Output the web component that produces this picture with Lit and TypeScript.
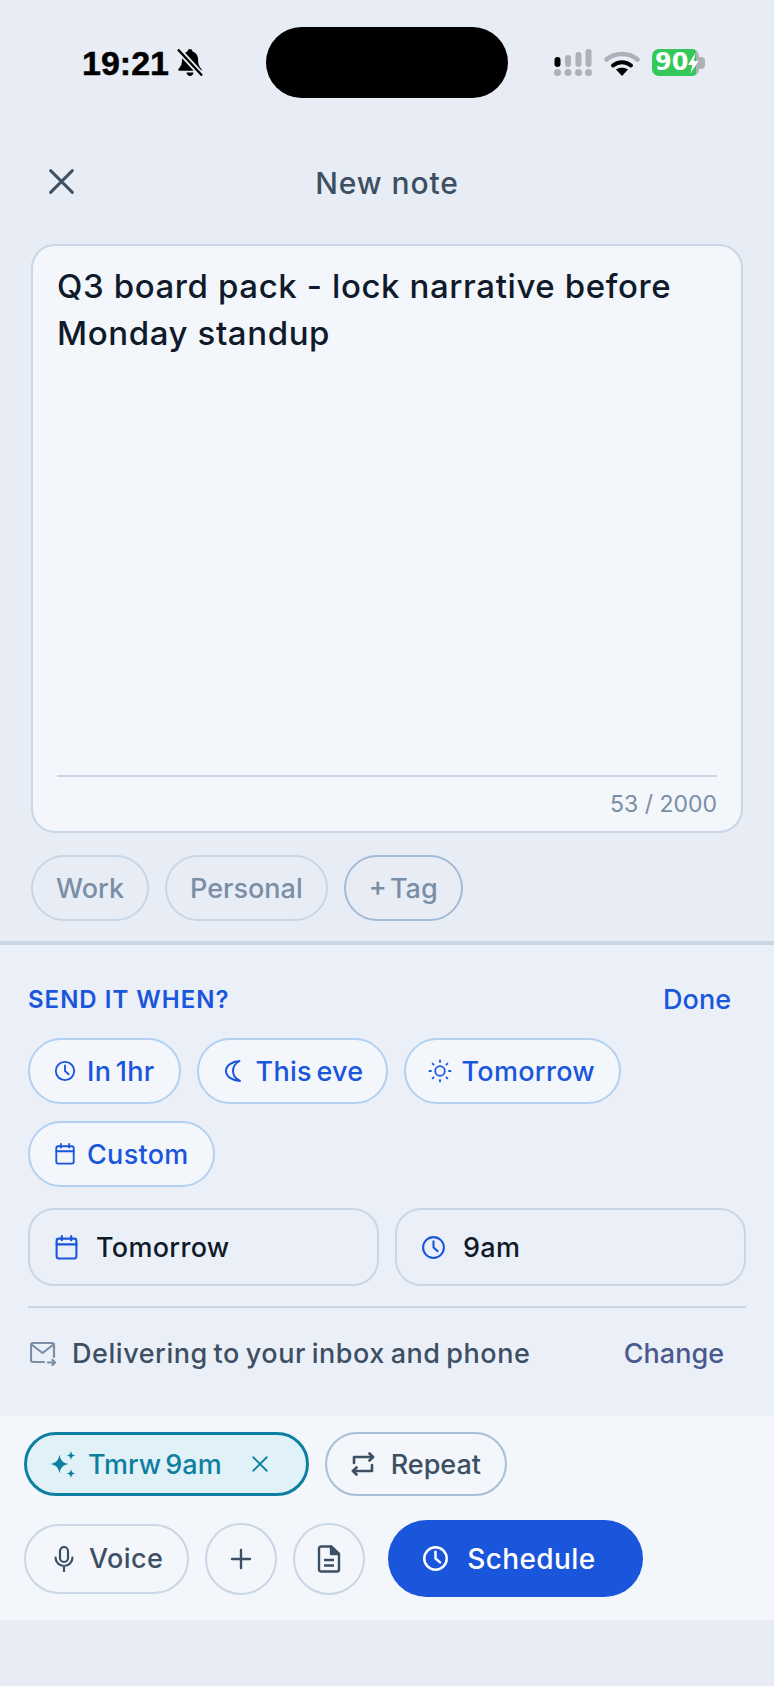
import { LitElement, html, css, svg } from "lit";
import { customElement } from "lit/decorators.js";

const ic = (size: number, body: unknown, sw = 2) => html`<svg class="ic" width=${size} height=${size} viewBox="0 0 24 24" fill="none" stroke="currentColor" stroke-width=${sw} stroke-linecap="round" stroke-linejoin="round">${body}</svg>`;
const clock = svg`<circle cx="12" cy="12" r="10"/><path d="M12 6v6l4 3.500"/>`;
const sun = svg`<circle cx="12" cy="12" r="4.800"/><path d="M12 1.500v1.500M12 21v1.500M1.500 12H3M21 12h1.500M4.600 4.600l1 1M18.400 18.400l1 1M4.600 19.400l1-1M18.400 5.600l1-1"/>`;
const cal = svg`<rect x="2.500" y="3.500" width="19" height="19" rx="2"/><path d="M2.500 9h19M7.500 1v4M16.500 1v4"/>`;
const x = svg`<path d="M3 3l18 18M21 3L3 21"/>`;

@customElement("app-root")
export class AppRoot extends LitElement {
  static styles = css`
    :host { display: block; width: 774px; height: 1686px; background: #e8edf5; font-family: "Inter", "Liberation Sans", sans-serif; overflow: hidden; }
    * { box-sizing: border-box; }
    .ic { display: block; flex: none; }
    .status { display: flex; align-items: center; padding-top: 27px; height: 98px; }
    .s-left { width: 266px; padding-left: 82px; display: flex; align-items: center; gap: 8px; }
    .time { font: 700 34px "Liberation Sans", sans-serif; color: #000; line-height: 40px; -webkit-text-stroke: 0.5px #000; }
    .island { width: 242px; height: 71px; background: #000; border-radius: 36px; }
    .s-right { padding-left: 46px; display: flex; align-items: center; gap: 12px; }
    .batt { display: flex; align-items: center; }
    .batt-body { width: 47px; height: 27px; border-radius: 7px; background: linear-gradient(90deg, #34c759 44px, #aeb1b8 44px); color: #fff; font: 700 24px "DejaVu Sans", sans-serif; line-height: 27px; padding-left: 3px; display: flex; align-items: center; }
    .nub { width: 6px; height: 12px; background: #aeb1b8; border-radius: 0 4px 4px 0; }

    .header { margin-top: 47px; height: 72px; display: grid; grid-template-columns: 1fr auto 1fr; align-items: center; padding: 0 47px; color: #3d4f63; }
    .title { font-size: 30px; letter-spacing: 0.9px; font-weight: 500; color: #3d4f63; margin-top: 3px; }

    .card { margin: 27px 31px 0; height: 589px; background: #f3f6fb; border: 2px solid #c8d6e6; border-radius: 24px; padding: 17px 24px 0; display: flex; flex-direction: column; }
    .body { font-size: 33px; letter-spacing: 0.6px; line-height: 47px; font-weight: 500; color: #0f1a2a; flex: 1; }
    .rule { height: 2px; background: #c8d6e6; }
    .count { height: 54px; line-height: 54px; text-align: right; font-size: 23px; color: #7a8ea5; }

    .tags { margin: 22px 31px 0; display: flex; gap: 16px; }
    .tag { height: 66px; border: 2px solid #c8d6e6; border-radius: 33px; display: flex; align-items: center; font-size: 27px; font-weight: 500; word-spacing: -4px; color: #7a8ea5; padding: 0 23px; }
    .tag.add { border-color: #a3bbd6; }

    .section { margin-top: 20px; border-top: 4px solid #c8d6e6; background: #ebf0f8; height: 475px; padding: 0 28px; }
    .sec-head { height: 60px; margin-top: 24px; display: flex; justify-content: space-between; align-items: center; padding-right: 15px; color: #1a56db; font-weight: 600; }
    .sec-head .l { font-size: 24px; letter-spacing: 1px; }
    .sec-head .r { font-size: 27px; font-weight: 500; }
    .chips { display: flex; flex-wrap: wrap; gap: 17px 16px; margin-top: 9px; width: 640px; }
    .chip { height: 66px; border: 2px solid #b3d0f0; border-radius: 33px; background: #f3f6fb; display: flex; align-items: center; gap: 11px; padding: 0 24px; color: #1a56db; font-size: 27px; font-weight: 500; letter-spacing: 0.300px; word-spacing: -3px; }
    .chip.moon { gap: 14px; padding: 0 22px 0 25px; }
    .chip.sun { gap: 10px; padding-left: 22px; }
    .dates { display: grid; grid-template-columns: 1fr 1fr; gap: 16px; margin-top: 21px; }
    .date { height: 78px; border: 2px solid #c8d6e6; border-radius: 26px; display: flex; align-items: center; gap: 17px; padding: 0 24px; font-size: 27px; letter-spacing: 0.300px; font-weight: 500; color: #0f1a2a; }
    .date .ic { color: #1a56db; }
    .rule2 { height: 2px; background: #c8d6e6; margin-top: 20px; }
    .deliver { display: flex; align-items: center; height: 91px; padding-left: 2px; font-size: 27px; font-weight: 500; letter-spacing: 0.550px; word-spacing: -2px; color: #3d4f63; gap: 16px; }
    .deliver .ic { color: #7a8ea5; }
    .deliver .change { margin-left: auto; margin-right: 22px; color: #4a5a8f; letter-spacing: 0; }

    .panel { background: #f3f6fb; height: 204px; padding: 16px 24px 0; }
    .row { display: flex; gap: 16px; align-items: center; }
    .row + .row { margin-top: 24px; }
    .pill { height: 64px; border: 2px solid #a8bed8; border-radius: 32px; display: flex; align-items: center; gap: 16px; padding: 0 24px; font-size: 27px; font-weight: 500; word-spacing: -3px; color: #3d4f63; }
    .pill.ai { border: 3px solid #0e7fa0; background: #e0f2f8; color: #0e7f9f; gap: 11px; padding: 0 37px 0 23px; }
    .pill.ai .close { margin-left: 18px; }
    .pill.voice { height: 70px; border-radius: 35px; border-color: #c8d6e6; gap: 15px; padding: 0 24px 0 28px; letter-spacing: 0.400px; }
    .round { width: 72px; height: 72px; border: 2px solid #c8d6e6; border-radius: 50%; display: flex; align-items: center; justify-content: center; color: #3d4f63; }
    .cta { margin-left: 7px; height: 77px; width: 255px; border-radius: 39px; background: #1a56db; color: #fff; display: flex; align-items: center; gap: 18px; padding-left: 34px; font-size: 28px; letter-spacing: 0.400px; font-weight: 500; }
  `;

  render() {
    return html`
      <div class="status">
        <div class="s-left">
          <span class="time">19:21</span>
          <svg width="26" height="29" viewBox="0 0 26 29"><path d="M13 1c1.500 0 2.400 1 2.600 2.400C19 4.500 21 7.500 21 11c0 5 1 7.500 3.500 10 .6.700.2 1.800-.8 1.800H2.300c-1 0-1.400-1.100-.8-1.800C4 18.500 5 16 5 11c0-3.500 2-6.500 5.400-7.600C10.600 2 11.500 1 13 1zM9.500 24.500h7c-.2 2-1.700 3.500-3.500 3.500s-3.300-1.500-3.500-3.500z" fill="#000"/><path d="M1 1.500l24 26" stroke="#e8edf5" stroke-width="6"/><path d="M1 1.500l24 26" stroke="#000" stroke-width="2.400"/></svg>
        </div>
        <div class="island"></div>
        <div class="s-right">
          <svg width="38" height="27" viewBox="0 0 38 27"><g fill="#aeb1b8"><circle cx="3.500" cy="23.500" r="3.500"/><circle cx="14" cy="23.500" r="3.500"/><circle cx="24.500" cy="23.500" r="3.500"/><circle cx="34.500" cy="23.500" r="3.500"/><rect x="11" y="6" width="6" height="12" rx="3"/><rect x="21.500" y="3" width="6" height="15" rx="3"/><rect x="31.500" y="0" width="6" height="18" rx="3"/></g><rect x="0.500" y="8" width="6" height="10" rx="3" fill="#000"/></svg>
          <svg width="36" height="27" viewBox="0 0 36 27" fill="none" stroke-linecap="round"><path d="M2.500 10.500C11 3 25 3 33.500 10.500" stroke="#aeb1b8" stroke-width="4.500"/><path d="M9 16.500c5-4.500 13-4.500 18 0" stroke="#000" stroke-width="4"/><path d="M18 27l-6-6.500c3.500-2.500 8.500-2.500 12 0z" fill="#000"/></svg>
          <div class="batt">
            <div class="batt-body">90<svg width="11" height="22" viewBox="0 0 11 22"><path d="M8 0L0 13h4.500l-2 9L11 9H6z" fill="#fff"/></svg></div>
            <div class="nub"></div>
          </div>
        </div>
      </div>

      <div class="header">
        ${ic(29, x, 2.400)}
        <div class="title">New note</div>
        <span></span>
      </div>

      <div class="card">
        <div class="body">Q3 board pack - lock narrative before Monday standup</div>
        <div class="rule"></div>
        <div class="count">53 / 2000</div>
      </div>

      <div class="tags">
        <div class="tag">Work</div>
        <div class="tag">Personal</div>
        <div class="tag add">+ Tag</div>
      </div>

      <div class="section">
        <div class="sec-head"><span class="l">SEND IT WHEN?</span><span class="r">Done</span></div>
        <div class="chips">
          <div class="chip">${ic(22, clock)}In 1hr</div>
          <div class="chip moon">
            <svg class="ic" width="18" height="24" viewBox="0 0 18 24" fill="none" stroke="currentColor" stroke-width="2" stroke-linejoin="round"><path d="M15.500 2C8 2.500 2 6.500 2 12s6 9.500 14 10c-4-2-7-6-7-10s3-8 6.500-10z"/></svg>
            This eve
          </div>
          <div class="chip sun">${ic(24, sun, 1.800)}Tomorrow</div>
          <div class="chip">${ic(22, cal)}Custom</div>
        </div>
        <div class="dates">
          <div class="date">${ic(25, cal)}Tomorrow</div>
          <div class="date">${ic(25, clock)}9am</div>
        </div>
        <div class="rule2"></div>
        <div class="deliver">
          <svg class="ic" width="26" height="24" viewBox="0 0 26 24" fill="none" stroke="currentColor" stroke-width="2.200" stroke-linecap="round" stroke-linejoin="round"><path d="M14 20H3a2 2 0 0 1-2-2V3a2 2 0 0 1 2-2h19a2 2 0 0 1 2 2v12"/><path d="M1.500 2.500L12.500 11 23.500 2.500"/><path d="M18 20.500h7M22.500 18l2.500 2.500-2.500 2.500"/></svg>
          <span>Delivering to your inbox and phone</span>
          <span class="change">Change</span>
        </div>
      </div>

      <div class="panel">
        <div class="row">
          <div class="pill ai">
            <svg class="ic" width="27" height="27" viewBox="0 0 27 27" fill="currentColor"><path d="M9.500 3.500c1 6 3 8 9 9.500-6 1.500-8 3.500-9 9.500-1-6-3-8-9-9.500 6-1.500 8-3.500 9-9.500z"/><path d="M21 0c.6 3 1.500 4 4.500 4.500-3 .500-3.900 1.500-4.500 4.500-.6-3-1.500-4-4.500-4.500 3-.5 3.900-1.500 4.500-4.500zM21 18c.6 3 1.500 4 4.500 4.500-3 .500-3.900 1.500-4.500 4.500-.6-3-1.500-4-4.500-4.500 3-.5 3.900-1.500 4.500-4.500z"/></svg>
            <span>Tmrw 9am</span>
            <span class="close">${ic(18, x, 2.400)}</span>
          </div>
          <div class="pill">
            <svg class="ic" width="24" height="24" viewBox="0 0 24 24" fill="none" stroke="currentColor" stroke-width="2.600" stroke-linecap="round" stroke-linejoin="round"><path d="M18.500 1.500L22 5l-3.500 3.500"/><path d="M22 5H3v6"/><path d="M5.500 15.500L2 19l3.500 3.500"/><path d="M2 19h19v-6"/></svg>
            <span>Repeat</span>
          </div>
        </div>
        <div class="row">
          <div class="pill voice">
            <svg class="ic" width="20" height="26" viewBox="0 0 20 26" fill="none" stroke="currentColor" stroke-width="2.200" stroke-linecap="round" stroke-linejoin="round"><rect x="6" y="1" width="8" height="15" rx="4"/><path d="M1.500 11.500a8.500 8.500 0 0 0 17 0M10 20v5"/></svg>
            <span>Voice</span>
          </div>
          <div class="round">${ic(24, svg`<path d="M12 3v18M3 12h18"/>`, 2.400)}</div>
          <div class="round">
            <svg class="ic" width="24" height="28" viewBox="0 0 24 28" fill="none" stroke="currentColor" stroke-width="2.400" stroke-linejoin="round"><path d="M4 1.500h10.500L22 9v15.500a2 2 0 0 1-2 2H4a2 2 0 0 1-2-2v-21a2 2 0 0 1 2-2z"/><path d="M14 1.500V9h8z" fill="currentColor"/><path d="M7 15h10M7 20.500h10"/></svg>
          </div>
          <div class="cta">${ic(27, clock, 2.200)}<span>Schedule</span></div>
        </div>
      </div>
    `;
  }
}
